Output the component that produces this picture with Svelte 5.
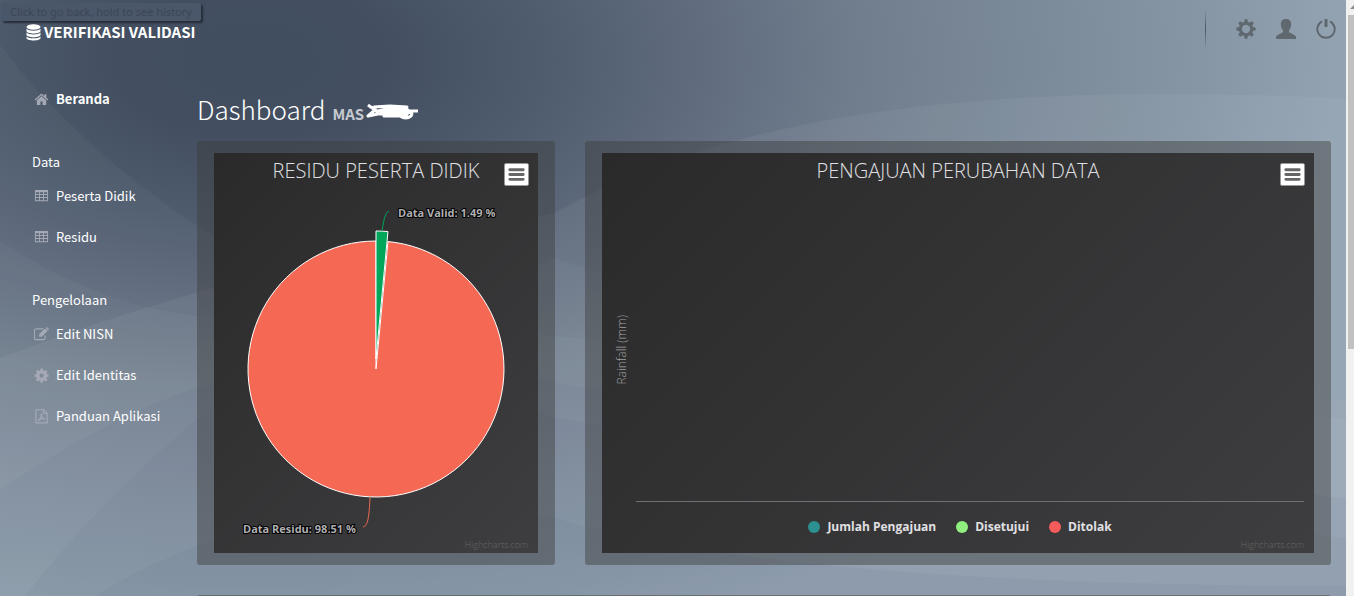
<script lang="ts">
	type MenuItem = { label: string; icon: string };
	type MenuGroup = { title: string; items: MenuItem[] };

	const groups: MenuGroup[] = [
		{
			title: 'Data',
			items: [
				{ label: 'Peserta Didik', icon: 'table' },
				{ label: 'Residu', icon: 'table' }
			]
		},
		{
			title: 'Pengelolaan',
			items: [
				{ label: 'Edit NISN', icon: 'edit' },
				{ label: 'Edit Identitas', icon: 'cog' },
				{ label: 'Panduan Aplikasi', icon: 'pdf' }
			]
		}
	];

	const legend = [
		{ name: 'Jumlah Pengajuan', color: '#2b908f' },
		{ name: 'Disetujui', color: '#90ee7e' },
		{ name: 'Ditolak', color: '#f45b5b' }
	];

	const valid = 1.49;
	const cx = 162;
	const cy = 216;
	const r = 128;

	const angle = (valid / 100) * Math.PI * 2;
	const edgeX = cx + r * Math.sin(angle);
	const edgeY = cy - r * Math.cos(angle);
	const residuPath = `M${cx} ${cy}L${edgeX} ${edgeY}A${r} ${r} 0 1 1 ${cx} ${cy - r}Z`;
	const validPath = `M${cx} ${cy}L${cx} ${cy - r}A${r} ${r} 0 0 1 ${edgeX} ${edgeY}Z`;
</script>

{#snippet icon(name: string)}
	<svg class="icon" viewBox="0 0 16 16" aria-hidden="true">
		{#if name === 'home'}
			<path d="M8 1.500.6 8l.9 1L8 3.500 14.500 9l.9-1-2.200-2V2.500h-2v1.700z" />
			<path d="M8 4.600 3 8.900v4.900h3.800v-3.700h2.400v3.700H13V8.900z" />
		{:else if name === 'table'}
			<path
				fill-rule="evenodd"
				d="M1 1h14v12H1zM2 3.400v2h3.400v-2zm4.400 0v2h3.200v-2zm4.200 0v2H14v-2zM2 6.400v2h3.400v-2zm4.400 0v2h3.200v-2zm4.200 0v2H14v-2zM2 9.600V12h3.400V9.600zm4.400 0V12h3.200V9.600zm4.200 0V12H14V9.600z"
			/>
		{:else if name === 'edit'}
			<path
				d="M10 2H2.500a2 2 0 0 0-2 2v7.500a2 2 0 0 0 2 2H10a2 2 0 0 0 2-2V9"
				fill="none"
				stroke="currentColor"
				stroke-width="1.200"
			/>
			<path d="m5.500 7.500 6.200-6 2.800 2.800-6.200 6.200H5.500zM12.300.9l.7-.7h.8L15.700 2v.9l-.7.7z" />
		{:else if name === 'cog'}
			<path
				fill-rule="evenodd"
				d="m7 .6-.4 2-1.200.5-1.700-1.100L2 3.700l1.100 1.700-.5 1.200-2 .4v2.300l2 .4.500 1.200L2 12.600l1.700 1.700 1.700-1.100 1.200.5.4 1.900h2.300l.4-1.900 1.200-.5 1.700 1.100 1.700-1.700-1.100-1.700.5-1.200 1.900-.4V7l-1.900-.4-.5-1.200 1.100-1.700L12.600 2l-1.700 1.100-1.200-.5-.4-2zM8.100 5.800a2.300 2.300 0 1 1 0 4.600 2.300 2.300 0 0 1 0-4.600z"
			/>
		{:else if name === 'pdf'}
			<path
				d="M2 .8h8.500L14 4.500v10.300H2zM10 .8v4h4M4 12.500c2-1 3.800-4 3.800-7.500 0 3.500 1.500 5 4.200 5.500-2.700-.5-5.500.3-8 2"
				fill="none"
				stroke="currentColor"
				stroke-width="1.200"
			/>
		{/if}
	</svg>
{/snippet}

{#snippet exportButton()}
	<button type="button" class="export" aria-label="Chart context menu">
		<svg viewBox="0 0 24 22" aria-hidden="true">
			<path d="M5 6h14M5 11h14M5 16h14" stroke="#666" stroke-width="3" stroke-linecap="round" />
		</svg>
	</button>
{/snippet}

<div class="page">
	<svg class="backdrop" viewBox="0 0 1354 596" preserveAspectRatio="none" aria-hidden="true">
		<path d="M0 45Q80 150 205 231Q380 320 555 336L1354 420V596H0Z" fill="#fff" opacity=".03" />
		<path d="M0 241Q100 307 205 317Q400 330 555 258Q900 380 1354 400V596H0Z" fill="#fff" opacity=".03" />
		<path d="M0 358Q100 320 205 290L555 213Q760 94 1160 94Q1260 94 1354 99V596H0Z" fill="#fff" opacity=".05" />
		<path d="M0 490Q110 415 205 385Q380 320 555 383L1354 500V596H0Z" fill="#3f5670" opacity=".06" />
		<path d="M25 596Q100 500 205 412Q380 340 555 418L1354 540V596Z" fill="#3f5670" opacity=".06" />
		<path d="M95 596Q150 562 205 543Q380 480 555 518Q780 586 1354 586V596Z" fill="#3f5670" opacity=".06" />
	</svg>

	<div class="tooltip" role="tooltip">Click to go back, hold to see history</div>

	<div class="app">
		<header>
			<a href="#home" class="brand">
				<svg viewBox="0 0 15 17" aria-hidden="true">
					<ellipse cx="7.500" cy="3" rx="7" ry="2.800" />
					<path d="M.5 4.800c1.500 2.600 12.500 2.600 14 0v2.400c-1 3-13 3-14 0z" />
					<path d="M.5 8.600c1.500 2.600 12.500 2.600 14 0V11c-1 3-13 3-14 0z" />
					<path d="M.5 12.400c1.500 2.600 12.500 2.600 14 0v1.800c-1 3-13 3-14 0z" />
				</svg>
				VERIFIKASI VALIDASI
			</a>
			<div class="tools">
				<button type="button" aria-label="Pengaturan">
					<svg viewBox="0 0 20 20" aria-hidden="true">
						<path
							fill-rule="evenodd"
							d="M8.700.3h2.600l.6 2.800 1.500.6 2.400-1.500L17.800 4l-1.500 2.600.6 1.500 2.800.6v2.600l-2.800.6-.6 1.500 1.500 2.400-2 2-2.400-1.500-1.500.6-.6 2.800H8.700l-.6-2.800-1.500-.6-2.400 1.500-2-2 1.500-2.400-.6-1.500-2.800-.6V8.700l2.800-.6.6-1.500L2.200 4.200l2-2 2.400 1.500 1.500-.6zM10 5.800a4.200 4.200 0 1 0 0 8.400 4.200 4.200 0 0 0 0-8.400z"
						/>
					</svg>
				</button>
				<button type="button" aria-label="Profil">
					<svg viewBox="0 0 20 20" aria-hidden="true">
						<path d="M10 0c3 0 5.200 1.800 5.200 5.300 0 3-1 4.500-2.200 6v2c2 1.500 7 2.500 7 5V20H0v-1.700c0-2.500 5-3.500 7-5v-2c-1.200-1.500-2.200-3-2.200-6C4.800 1.800 7 0 10 0z" />
					</svg>
				</button>
				<button type="button" aria-label="Keluar">
					<svg viewBox="0 0 20 20" aria-hidden="true">
						<path d="M6 2.300a8.700 8.700 0 1 0 8 0" fill="none" stroke="currentColor" stroke-width="2" />
						<path d="M8.500 0h3v8h-3z" />
					</svg>
				</button>
			</div>
		</header>

		<div class="body">
			<nav>
				<a href="#beranda" class="active">{@render icon('home')}Beranda</a>
				{#each groups as group (group.title)}
					<h2>{group.title}</h2>
					{#each group.items as item (item.label)}
						<a href="#menu">{@render icon(item.icon)}{item.label}</a>
					{/each}
				{/each}
			</nav>

			<main>
				<h1>
					Dashboard
					<small>MAS</small>
					<svg class="scribble" viewBox="0 0 54 18" aria-hidden="true">
						<path d="M2 3 9 8 2 14 12 12 8 5 24 4 41 5 20 7 12 9 42 8 14 12 40 11 18 14 40 14 43 9 52 9M40 11Q48 9 45 14Q40 18 34 14" />
					</svg>
				</h1>

				<div class="panels">
					<section class="panel">
						<div class="chart">
							<h3>RESIDU PESERTA DIDIK</h3>
							{@render exportButton()}
							<svg class="pie" viewBox="0 0 324 400" role="img" aria-label="Residu peserta didik">
								<g stroke="#fff" stroke-linejoin="round">
									<path d={residuPath} fill="#f56954" />
									<path d={validPath} fill="#00a65a" transform="translate(0 -10)" />
								</g>
								<path d="M168 78C170 66 171 60 175 58" fill="none" stroke="#00a65a" />
								<path d="M156 345C155 364 154 373 149 374" fill="none" stroke="#f56954" />
								<text x="184" y="64">Data Valid: 1.49 %</text>
								<text x="29" y="380">Data Residu: 98.51 %</text>
							</svg>
							<a class="credits" href="#highcharts">Highcharts.com</a>
						</div>
					</section>

					<section class="panel">
						<div class="chart">
							<h3>PENGAJUAN PERUBAHAN DATA</h3>
							{@render exportButton()}
							<div class="plot"><span>Rainfall (mm)</span></div>
							<ul class="legend">
								{#each legend as series (series.name)}
									<li><i style="background: {series.color}"></i>{series.name}</li>
								{/each}
							</ul>
							<a class="credits" href="#highcharts">Highcharts.com</a>
						</div>
					</section>
				</div>
				<div class="next"></div>
			</main>
		</div>
	</div>

	<div class="scrollbar" aria-hidden="true">
		<svg viewBox="0 0 8 15"><path d="M4 9 8 5V9z" fill="#8a8a8a" /></svg>
		<span></span>
	</div>
</div>

<style>
	:global(body) {
		overflow: hidden;
	}

	.page {
		position: relative;
		display: flex;
		height: 100vh;
		overflow: hidden;
		background: radial-gradient(
			ellipse 1120px 620px at 250px 60px,
			#414e5f 0%,
			#434f60 12%,
			#4f5c6e 26%,
			#606c7e 40%,
			#707d8d 54%,
			#7c8b9a 71%,
			#8696a5 85%,
			#92a2b1 97%
		);
		color: #fff;
		font-family: 'Noto Sans CJK SC', sans-serif;
		font-size: 13px;
		line-height: 20px;
	}

	.backdrop {
		position: absolute;
		inset: 0;
		width: 100%;
		height: 100%;
	}

	.tooltip {
		position: absolute;
		top: 3px;
		left: 1px;
		padding: 0 9px;
		border-radius: 2px;
		background: #4a566a;
		box-shadow: 2px 2px 2px #252d38;
		color: #3c4755;
		font: 11px/18px 'Noto Sans', sans-serif;
	}

	.app {
		position: relative;
		flex: 1;
		min-width: 0;
	}

	a {
		color: inherit;
		text-decoration: none;
	}

	svg {
		fill: currentColor;
	}

	header {
		display: flex;
		justify-content: space-between;
		padding: 10px 10px 0 26px;
	}

	.brand {
		display: flex;
		align-items: center;
		gap: 3px;
		height: 44px;
		font-size: 15px;
		font-weight: 700;
	}

	.brand svg {
		width: 15px;
		height: 17px;
	}

	.tools {
		display: flex;
		align-items: center;
		gap: 20px;
		height: 38px;
		padding-left: 30px;
		border-left: 1px solid;
		border-image: linear-gradient(transparent, #4c565f, transparent) 1;
	}

	.tools button {
		display: flex;
		padding: 0;
		border: 0;
		background: none;
		color: #5f676f;
		cursor: pointer;
	}

	.tools svg {
		width: 20px;
		height: 20px;
	}

	.body {
		display: flex;
		padding-right: 15px;
	}

	nav {
		flex: 0 0 197px;
		box-sizing: border-box;
		padding: 35px 0 0 32px;
	}

	nav a {
		display: flex;
		align-items: center;
		gap: 7px;
		margin-bottom: 21px;
		padding-left: 2px;
	}

	nav .active {
		font-weight: 700;
	}

	nav h2 {
		margin: 43px 0 14px;
		font-size: 13px;
		font-weight: 400;
		line-height: 20px;
	}

	.icon {
		width: 15px;
		height: 15px;
		color: #a4a9b5;
	}

	main {
		flex: 1;
		min-width: 0;
	}

	h1 {
		display: flex;
		align-items: baseline;
		gap: 7px;
		margin: 34px 0 12px;
		font-size: 26px;
		font-weight: 300;
		line-height: 41px;
	}

	h1 small {
		color: #c5cad0;
		font-size: 15px;
		font-weight: 700;
		line-height: 20px;
	}

	.scribble {
		width: 54px;
		height: 18px;
		margin: 0 0 -5px -5px;
		fill: none;
		stroke: #fff;
		stroke-width: 3;
		stroke-linejoin: round;
	}

	.panels {
		display: grid;
		grid-template-columns: 358fr 746fr;
		gap: 30px;
	}

	.panel {
		padding: 12px 17px;
		border-radius: 3px;
		background: rgba(60, 60, 60, 0.45);
	}

	.chart {
		position: relative;
		display: flex;
		flex-direction: column;
		height: 400px;
		background: linear-gradient(135deg, #2a2a2b, #3e3e40);
		font-family: 'Open Sans', sans-serif;
	}

	h3 {
		margin: 0;
		padding-top: 4px;
		color: #e0e0e3;
		font-size: 20px;
		font-weight: 300;
		line-height: 28px;
		text-align: center;
	}

	.export {
		position: absolute;
		z-index: 1;
		top: 10px;
		right: 9px;
		width: 25px;
		height: 23px;
		padding: 0;
		border: 1px solid #999;
		border-radius: 2px;
		background: #fff;
		cursor: pointer;
	}

	.export svg {
		display: block;
		width: 100%;
	}

	.pie {
		position: absolute;
		inset: 0;
		width: 100%;
		height: 100%;
	}

	.pie text {
		fill: #b0b0b3;
		stroke: #000;
		stroke-width: 2px;
		paint-order: stroke;
		font-size: 11px;
		font-weight: 700;
	}

	.plot {
		display: flex;
		flex: 1;
		align-items: center;
		margin: 0 10px 0 34px;
		padding-top: 14px;
		border-bottom: 1px solid #707073;
	}

	.plot span {
		margin-left: -23px;
		color: #a0a0a3;
		font-size: 12px;
		font-weight: 300;
		line-height: 18px;
		writing-mode: vertical-rl;
		transform: rotate(180deg);
	}

	.legend {
		display: flex;
		justify-content: center;
		gap: 20px;
		margin: 0;
		padding: 15px 0 16px 4px;
		list-style: none;
		color: #e0e0e3;
		font-size: 12px;
		font-weight: 700;
	}

	.legend li {
		display: flex;
		align-items: center;
		gap: 7px;
	}

	.legend i {
		width: 12px;
		height: 12px;
		border-radius: 50%;
	}

	.credits {
		position: absolute;
		right: 10px;
		bottom: 1px;
		color: #666;
		font-size: 9px;
		font-weight: 300;
		line-height: 14px;
	}

	.next {
		height: 30px;
		margin-top: 30px;
		border-radius: 3px;
		background: rgba(60, 60, 60, 0.45);
	}

	.scrollbar {
		position: relative;
		flex: 0 0 8px;
		background: #f1f1f1;
	}

	.scrollbar svg {
		display: block;
		width: 8px;
		height: 15px;
	}

	.scrollbar span {
		display: block;
		height: 334px;
		margin-left: 2px;
		background: #c1c1c1;
	}
</style>
